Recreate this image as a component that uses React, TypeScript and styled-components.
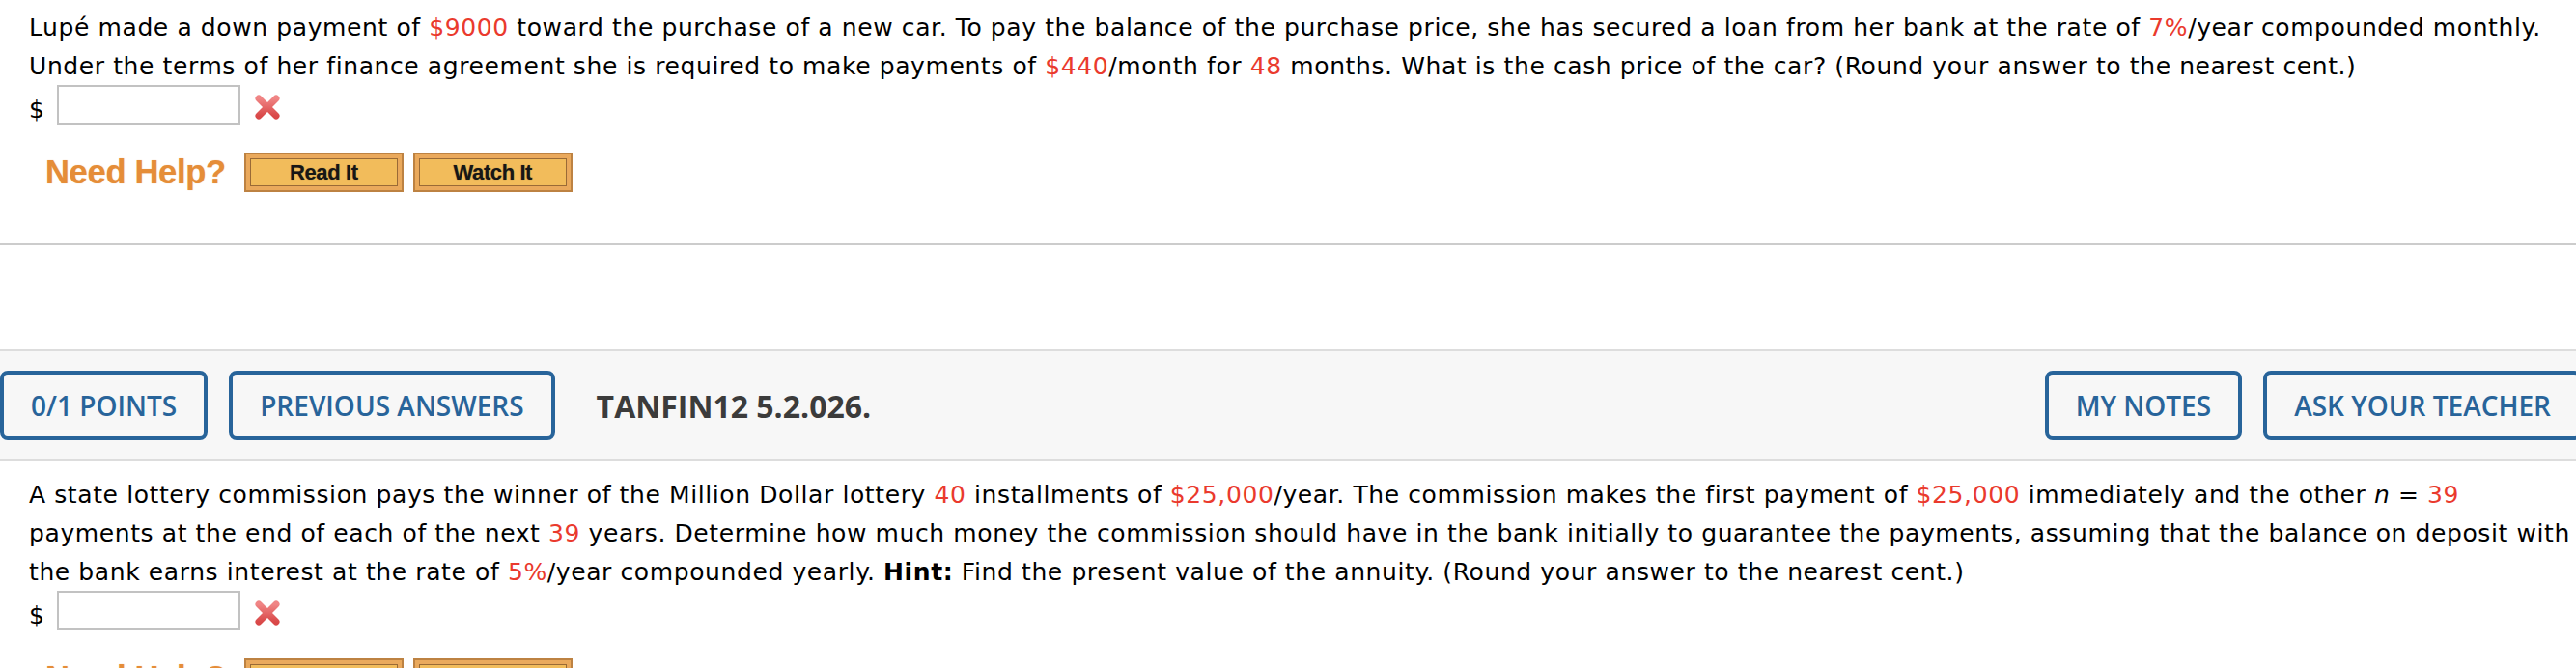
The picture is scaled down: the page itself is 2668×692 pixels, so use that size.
import React from 'react';
import styled, { createGlobalStyle } from 'styled-components';

const GlobalStyle = createGlobalStyle`
  html, body {
    margin: 0;
    padding: 0;
    background: #ffffff;
    overflow: hidden;
  }
`;

const Page = styled.div`
  width: 2674px;
  font-family: 'DejaVu Sans', Verdana, sans-serif;
  color: #000;
`;

const Question = styled.section<{ $top: number }>`
  padding: ${(p) => p.$top}px 0 0 30px;
`;

const Prompt = styled.div`
  font-size: 25px;
  letter-spacing: 0.6px;
  line-height: 40px;
  white-space: nowrap;
`;

const Val = styled.span`
  color: #ea3a2d;
`;

const AnswerRow = styled.div`
  display: flex;
  align-items: center;
  gap: 13px;
  height: 41px;
  margin-top: -1px;
  font-size: 25px;
`;

const Dollar = styled.span`
  line-height: 1;
  padding-top: 10px;
`;

const AnswerInput = styled.div`
  box-sizing: border-box;
  width: 190px;
  height: 41px;
  border: 2px solid #c2c2c2;
  background: #fff;
`;

const WrongMark = styled.svg`
  margin-left: 1px;
  width: 28px;
  height: 28px;
  margin-top: 4px;
`;

const HelpRow = styled.div`
  display: flex;
  align-items: center;
  margin-top: 29px;
  padding-left: 17px;
  height: 41px;
`;

const HelpLabel = styled.span`
  font-family: 'Liberation Sans', Arial, sans-serif;
  font-weight: 700;
  font-size: 34.5px;
  color: #e58d38;
  margin-right: 19px;
  letter-spacing: -0.3px;
  text-shadow: 0 0 1px rgba(229, 141, 56, 0.6);
`;

const HelpButton = styled.div`
  box-sizing: border-box;
  width: 165px;
  height: 41px;
  margin-right: 10px;
  display: flex;
  align-items: center;
  justify-content: center;
  background: #f2bc5b;
  border: 2px solid #bd8242;
  box-shadow: inset 0 0 0 4px #eaa95c, inset 0 0 0 5px #9a6a36;
  font-family: 'Liberation Sans', Arial, sans-serif;
  font-weight: 700;
  font-size: 22px;
  color: #161616;
  letter-spacing: -0.4px;
  text-shadow: 0 0 1px rgba(0, 0, 0, 0.45);
`;

const Separator = styled.hr`
  margin: 53px 0 0;
  border: 0;
  border-top: 2px solid #cccccc;
  height: 0;
`;

const Spacer = styled.div`
  height: 108px;
`;

const Band = styled.div`
  display: flex;
  align-items: center;
  padding: 20px 0;
  background: #f7f7f7;
  border-top: 2px solid #dddddd;
  border-bottom: 2px solid #dddddd;
`;

const OutlineButton = styled.div`
  box-sizing: border-box;
  height: 72px;
  padding: 0 28px;
  display: flex;
  align-items: center;
  border: 4px solid #28649a;
  border-radius: 8px;
  background: #f7f7f7;
  font-family: 'Open Sans', sans-serif;
  font-weight: 600;
  font-size: 28px;
  color: #28649a;
  white-space: nowrap;
`;

const Group = styled.div<{ $push?: boolean }>`
  display: flex;
  gap: 22px;
  margin-left: ${(p) => (p.$push ? 'auto' : '0')};
`;

const QuestionId = styled.div`
  margin-left: 43px;
  font-family: 'Open Sans', sans-serif;
  font-weight: 700;
  font-size: 32px;
  color: #3b3b3b;
`;

const Cross = () => (
  <WrongMark viewBox="0 0 28 28">
    <defs>
      <linearGradient id="xg" x1="0" y1="0" x2="0" y2="1">
        <stop offset="0" stopColor="#f08585" />
        <stop offset="1" stopColor="#d94848" />
      </linearGradient>
    </defs>
    <g stroke="url(#xg)" strokeWidth="7" strokeLinecap="round">
      <line x1="5" y1="5" x2="23" y2="23" />
      <line x1="23" y1="5" x2="5" y2="23" />
    </g>
  </WrongMark>
);

const Answer = () => (
  <>
    <AnswerRow>
      <Dollar>$</Dollar>
      <AnswerInput />
      <Cross />
    </AnswerRow>
    <HelpRow>
      <HelpLabel>Need Help?</HelpLabel>
      <HelpButton>Read It</HelpButton>
      <HelpButton>Watch It</HelpButton>
    </HelpRow>
  </>
);

export default function App() {
  return (
    <Page>
      <GlobalStyle />
      <Question $top={9}>
        <Prompt>
          Lupé made a down payment of <Val>$9000</Val> toward the purchase of a new car. To pay the
          balance of the purchase price, she has secured a loan from her bank at the rate of{' '}
          <Val>7%</Val>/year compounded monthly.
          <br />
          Under the terms of her finance agreement she is required to make payments of{' '}
          <Val>$440</Val>/month for <Val>48</Val> months. What is the cash price of the car? (Round
          your answer to the nearest cent.)
        </Prompt>
        <Answer />
      </Question>
      <Separator />
      <Spacer />
      <Band>
        <Group>
          <OutlineButton>0/1 POINTS</OutlineButton>
          <OutlineButton>PREVIOUS ANSWERS</OutlineButton>
        </Group>
        <QuestionId>TANFIN12 5.2.026.</QuestionId>
        <Group $push>
          <OutlineButton>MY NOTES</OutlineButton>
          <OutlineButton>ASK YOUR TEACHER</OutlineButton>
        </Group>
      </Band>
      <Question $top={15}>
        <Prompt>
          A state lottery commission pays the winner of the Million Dollar lottery <Val>40</Val>{' '}
          installments of <Val>$25,000</Val>/year. The commission makes the first payment of{' '}
          <Val>$25,000</Val> immediately and the other <i>n</i> = <Val>39</Val>
          <br />
          payments at the end of each of the next <Val>39</Val> years. Determine how much money the
          commission should have in the bank initially to guarantee the payments, assuming that the
          balance on deposit with
          <br />
          the bank earns interest at the rate of <Val>5%</Val>/year compounded yearly.{' '}
          <b>Hint:</b> Find the present value of the annuity. (Round your answer to the nearest
          cent.)
        </Prompt>
        <Answer />
      </Question>
    </Page>
  );
}
